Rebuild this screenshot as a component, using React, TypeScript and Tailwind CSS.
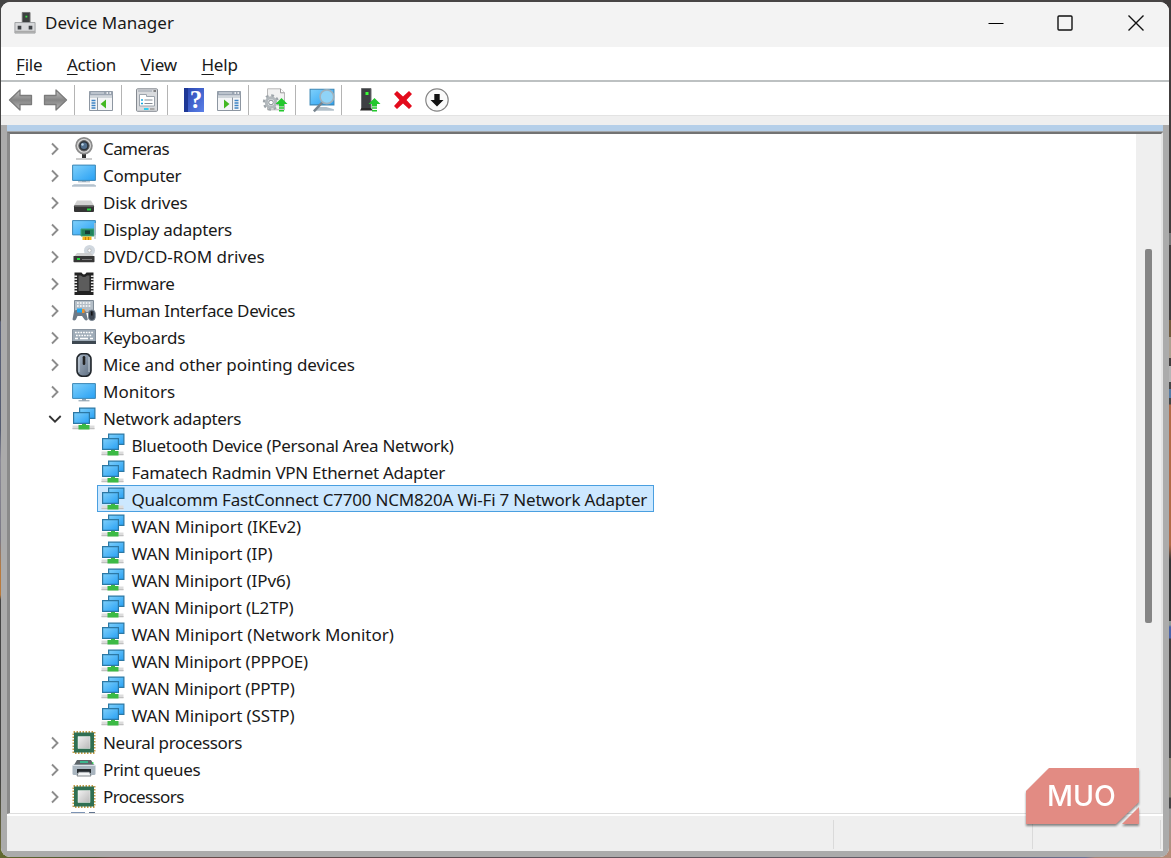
import type { ReactNode } from "react";

type IconProps = { className?: string };

const Gradients = () => (
  <svg className="absolute h-0 w-0" aria-hidden="true">
    <defs>
      <linearGradient id="screen" x1="0" y1="0" x2="1" y2="1">
        <stop offset="0" stopColor="#7fd0fb" />
        <stop offset="1" stopColor="#27a0f4" />
      </linearGradient>
      <linearGradient id="arrow" x1="0" y1="0" x2="0" y2="1">
        <stop offset="0" stopColor="#c4c4c4" />
        <stop offset="0.5" stopColor="#858585" />
        <stop offset="1" stopColor="#b8b8b8" />
      </linearGradient>
      <linearGradient id="metal" x1="0" y1="0" x2="1" y2="1">
        <stop offset="0" stopColor="#f1f1f1" />
        <stop offset="1" stopColor="#b9b9b9" />
      </linearGradient>
      <linearGradient id="mouse" x1="0" y1="0" x2="1" y2="1">
        <stop offset="0" stopColor="#a9b7c7" />
        <stop offset="1" stopColor="#5d6d80" />
      </linearGradient>
    </defs>
  </svg>
);

const Icon = ({ children, className = "h-6 w-6" }: IconProps & { children: ReactNode }) => (
  <svg viewBox="0 0 24 24" className={`${className} shrink-0`}>
    {children}
  </svg>
);

const CameraIcon = () => (
  <Icon>
    <path d="M10 17h4v4h-4z" fill="#333" />
    <path d="M4 22h16" stroke="#999" />
    <circle cx="12" cy="8.8" r="7.9" fill="#d8d8d8" stroke="#8c8c8c" strokeWidth="1.8" />
    <circle cx="12" cy="8.8" r="5.2" fill="#2c333b" stroke="#666" />
    <circle cx="12" cy="8.8" r="3.2" fill="#52708f" />
    <circle cx="10.5" cy="7.5" r="1.2" fill="#bdd5e8" />
  </Icon>
);

const ComputerIcon = () => (
  <Icon>
    <path d="M.6 1.1h22.8v15.3H.6z" fill="url(#screen)" stroke="#3c87b5" />
    <path d="M10 17h4v1h-4z" fill="#8ba1b3" />
    <path d="M6 17.800h12" stroke="#9fb0be" />
    <path d="M2 20h20l2 1.800H0z" fill="#c5d0da" />
    <path d="M0 22h24" stroke="#94a8b9" />
  </Icon>
);

const DiskIcon = () => (
  <Icon>
    <path d="M5 9.500h14l3 5H2z" fill="#d2d2d2" />
    <rect x="2" y="14.300" width="20" height="6.700" rx="1" fill="#343434" />
    <path d="M2.500 15h19" stroke="#888" />
    <path d="M15 17.500h4v2h-4z" fill="#22d13b" />
  </Icon>
);

const DisplayIcon = () => (
  <Icon>
    <path d="M.6 2.600h22.800v14.300H.6z" fill="url(#screen)" stroke="#3c87b5" />
    <path d="M9 11h13v7H9z" fill="#23825b" stroke="#3ba577" />
    <path d="M13 12.500h5v3.500h-5z" fill="#173c34" />
    <path d="M10.500 18.500h9V22h-9z" fill="#f5b51b" />
    <path d="M13.500 19v3m3-3v3" stroke="#c87d0a" />
    <path d="M23 5v16" stroke="#bcc4c8" strokeWidth="1.500" />
  </Icon>
);

const DvdIcon = () => (
  <Icon>
    <circle cx="17.500" cy="5.500" r="5.500" fill="#d1d8df" />
    <circle cx="17.500" cy="5.500" r="1.700" fill="#fff" stroke="#aaa" strokeWidth=".7" />
    <path d="M5 8h14l3 3.500H2z" fill="#cacaca" opacity=".9" />
    <rect x="1.500" y="11" width="21" height="6.200" rx=".6" fill="#373737" />
    <path d="M5 13h3v2H5z" fill="#27d740" />
    <path d="M10 14.500h10" stroke="#777" />
  </Icon>
);

const FirmwareIcon = () => (
  <Icon>
    <path d="M2.500.5h7q2.500 4 5 0h7v22.500h-19z" fill="#222" />
    <path d="M6.500 3.500h2.500q3 3 6 0h2.500V19h-11z" fill="#5c5c5c" />
    <path d="M3.600 3.500v17M20.400 3.500v17" stroke="#e9e9e9" strokeWidth="3" strokeDasharray="1.500 1.500" />
  </Icon>
);

const HidIcon = () => (
  <Icon>
    <path d="M2.500 1.500h19v12h-19z" fill="#b4bec7" stroke="#7f8b96" />
    <path d="M5 4h14M5 7h14" stroke="#fff" strokeWidth="1.500" strokeDasharray="1.700 1.200" />
    <path d="M.5 20.500l1.500-8q.5-2 3-1.500h6q2.500 0 3 2l1.800 7.500q-1.500 2-3.300 0L10 17H5.500L4 20.500q-2 2-3.500 0z" fill="#6d7a87" />
    <path d="M5 9.500h5v4H5z" fill="#20a7f2" />
    <path d="M10 10h2.500v4H10z" fill="#f0932c" />
    <rect x="16.500" y="11" width="6.700" height="10.500" rx="3.200" fill="#3e4854" stroke="#7c8894" />
    <path d="M19.800 12.500v4" stroke="#111" strokeWidth="1.500" />
  </Icon>
);

const KeyboardIcon = () => (
  <Icon>
    <path d="M.5 3.500h23v12H.5z" fill="#9eabb7" stroke="#8994a0" />
    <path d="M3 6.500h18M4 9.500h16" stroke="#fff" strokeWidth="1.600" strokeDasharray="1.700 1" />
    <path d="M3 12.500h3m2 0h8m2 0h3" stroke="#fff" strokeWidth="1.300" />
    <path d="M0 15h24v3H0z" fill="#3e4851" />
  </Icon>
);

const MouseIcon = () => (
  <Icon>
    <rect x="5" y=".7" width="14" height="22.600" rx="5.500" fill="url(#mouse)" stroke="#22272c" strokeWidth="1.600" />
    <path d="M7 4v15M17 4v15" stroke="#d1dae2" strokeWidth=".9" />
    <rect x="10.700" y="3" width="2.600" height="9" rx="1.300" fill="#222" />
  </Icon>
);

const MonitorIcon = () => (
  <Icon>
    <path d="M.6 3.600h22.800v14.800H.6z" fill="url(#screen)" stroke="#3c87b5" />
    <path d="M10 19h4v1.500h-4z" fill="#8ba1b3" />
    <path d="M6.500 20.800h11" stroke="#8497a6" />
  </Icon>
);

const NetworkIcon = () => (
  <Icon>
    <path d="M.5 18.500h22v4H.5z" fill="#dcdcdc" />
    <path d="M.5 21.500h22" stroke="#c0c0c0" />
    <path d="M10 15h4v3h3.500v4.500h-11V18H10z" fill="#3cba45" />
    <path d="M7.600 1.100h15.300v10.300H7.600z" fill="url(#screen)" stroke="#2c78a4" strokeWidth="1.200" />
    <path d="M1.600 5.600h15.800v10.800H1.600z" fill="url(#screen)" stroke="#2c78a4" strokeWidth="1.200" />
  </Icon>
);

const ChipIcon = () => (
  <Icon>
    <rect x="1.500" y="1" width="21" height="21" fill="none" stroke="#c49a45" strokeWidth="2" strokeDasharray="1.500 1.500" />
    <path d="M2 1.500h20v20H2z" fill="#2f6f52" />
    <path d="M6 5.500h12v12H6z" fill="url(#metal)" stroke="#eaf1ed" strokeWidth=".5" />
  </Icon>
);

const PrinterIcon = () => (
  <Icon>
    <path d="M5 2h14l3 5H2z" fill="#5d6468" />
    <path d="M8 4h8" stroke="#31d19a" strokeWidth="1.500" />
    <rect x=".5" y="6.500" width="23" height="10.500" rx="1.500" fill="#a9b5bf" />
    <path d="M1 7.500h22" stroke="#dce3e9" />
    <path d="M5 11h14v4H5z" fill="#24292d" />
    <path d="M6.500 14h11l1.500 4H5z" fill="#f3f5f6" stroke="#636b71" strokeWidth=".8" />
    <path d="M20 5h1.500" stroke="#23d64a" strokeWidth="1.500" />
  </Icon>
);

const UpArrow = () => (
  <>
    <path d="M18.500 10l6 6h-3.500v2.500h-5V16h-3.500z" fill="#23c72d" />
    <path d="M16 20h5M16 22.800h5" stroke="#23c72d" strokeWidth="1.500" />
  </>
);

const ConsoleIcon = ({ flip = false }: { flip?: boolean }) => (
  <Icon>
    <path d="M.5 3.500h23v19H.5z" fill="#f4f5f7" stroke="#8d96a1" />
    <path d="M.5 3.500h23v4H.5z" fill="#9aa4b1" />
    <path d="M2 5h13" stroke="#dce1e7" />
    <path d="M17.500 5h1.500m1.500 0H22" stroke="#fff" strokeWidth="1.300" />
    <path d="M1 9h22" stroke="#c5cbd2" strokeWidth="1.500" />
    <g transform={flip ? "matrix(-1 0 0 1 24 0)" : undefined}>
      <path d="M8.500 9.500V22" stroke="#8d96a1" />
      <path d="M2.500 12.500h4M2.500 15h4M2.500 17.500h4M2.500 20h4" stroke="#3d83c4" strokeWidth="1.300" />
      <path d="M17 11.500v9L11.500 16z" fill="#43b822" />
    </g>
  </Icon>
);

const PropertiesIcon = () => (
  <Icon>
    <rect x="1.500" y=".8" width="21" height="22.500" rx="1" fill="#d9dbde" stroke="#858a91" />
    <path d="M3 3h14" stroke="#aeb4bc" strokeWidth="1.500" />
    <path d="M18.500 3H21" stroke="#666" strokeWidth="1.500" />
    <path d="M4.500 6.500h7v2h8v9.500h-15z" fill="#fff" stroke="#9da4ac" />
    <path d="M6 12h2M6 15.500h2" stroke="#18a8de" strokeWidth="1.500" />
    <path d="M9.500 12h8M9.500 15.500h8" stroke="#858c95" />
    <path d="M9 21h4.500" stroke="#32cdee" strokeWidth="2" />
    <path d="M15 21h4.500" stroke="#aaa" strokeWidth="2" />
  </Icon>
);

const HelpIcon = () => (
  <div className="flex h-6 w-5 items-center justify-center border-l-4 border-[#1d3796] bg-linear-to-br from-[#2d49b4] to-[#5b80e8] font-[Liberation_Serif,serif] text-[25px] leading-6 font-bold text-white">
    ?
  </div>
);

const GearPageIcon = () => (
  <Icon className="h-6 w-6 overflow-visible">
    <path d="M4.500.8h13l4 4v17h-17z" fill="#f1f1f1" stroke="#b8b8b8" />
    <path d="M17.500.8v4h4" fill="#fff" stroke="#999" />
    <circle cx="8" cy="14.500" r="7" fill="none" stroke="#9ea5aa" strokeWidth="2.400" strokeDasharray="2.750 2.750" />
    <circle cx="8" cy="14.500" r="4.700" fill="#e9ecee" stroke="#b2b8bc" strokeWidth="3" />
    <circle cx="8" cy="14.500" r="2.300" fill="#fff" stroke="#858d92" />
    <UpArrow />
  </Icon>
);

const ScanIcon = () => (
  <Icon className="h-[26px] w-[26px]">
    <path d="M1 2h22v14.500H1z" fill="url(#screen)" stroke="#3c87b5" />
    <path d="M8 18.500h8l7 2v1.500H5z" fill="#b3c0ca" />
    <path d="M12.500 14L4.500 22.500" stroke="#78858f" strokeWidth="2.300" />
    <circle cx="16.500" cy="9" r="6.300" fill="#8fd3f7" stroke="#9eb1bd" strokeWidth="1.500" />
  </Icon>
);

const UpdateDriverIcon = () => (
  <Icon className="h-6 w-6 overflow-visible">
    <path d="M5.500.5h9.500v20H5.500z" fill="#3d4043" stroke="#6c6f71" />
    <path d="M5.500 20h9.500l2 2.500H4z" fill="#292929" />
    <path d="M9.500 4h3v3h-3z" fill="#3aff37" />
    <UpArrow />
  </Icon>
);

const BackIcon = ({ flip = false }: { flip?: boolean }) => (
  <svg viewBox="0 0 25 24" className={`h-6 w-[25px] ${flip ? "-scale-x-100" : ""}`}>
    <path d="M1.500 12L12 2v5.500h11.500v9H12V22z" fill="url(#arrow)" stroke="#7b7b7b" strokeWidth="1.300" strokeLinejoin="round" />
  </svg>
);

const Chevron = ({ open = false }: { open?: boolean }) => (
  <svg viewBox="0 0 14 14" className="mt-0.5 h-3.5 w-3.5">
    {open ? (
      <path d="M1.300 4l5.700 5.700L12.700 4" fill="none" stroke="#333" strokeWidth="1.800" />
    ) : (
      <path d="M4 1.500L9.500 7 4 12.500" fill="none" stroke="#8c8c8c" strokeWidth="1.900" />
    )}
  </svg>
);

type TreeNode = { label: string; tracking: string; icon: () => ReactNode; open?: boolean };

const before: TreeNode[] = [
  { label: "Cameras", tracking: "tracking-[-0.6px]", icon: CameraIcon },
  { label: "Computer", tracking: "tracking-[-0.3px]", icon: ComputerIcon },
  { label: "Disk drives", tracking: "tracking-[-0.2px]", icon: DiskIcon },
  { label: "Display adapters", tracking: "tracking-[-0.27px]", icon: DisplayIcon },
  { label: "DVD/CD-ROM drives", tracking: "tracking-normal", icon: DvdIcon },
  { label: "Firmware", tracking: "tracking-[-0.5px]", icon: FirmwareIcon },
  { label: "Human Interface Devices", tracking: "tracking-[-0.37px]", icon: HidIcon },
  { label: "Keyboards", tracking: "tracking-[-0.2px]", icon: KeyboardIcon },
  { label: "Mice and other pointing devices", tracking: "tracking-[-0.1px]", icon: MouseIcon },
  { label: "Monitors", tracking: "tracking-normal", icon: MonitorIcon },
  { label: "Network adapters", tracking: "tracking-[-0.36px]", icon: NetworkIcon, open: true },
];

const adapters = [
  { label: "Bluetooth Device (Personal Area Network)", tracking: "tracking-[-0.3px]" },
  { label: "Famatech Radmin VPN Ethernet Adapter", tracking: "tracking-[-0.28px]" },
  {
    label: "Qualcomm FastConnect C7700 NCM820A Wi-Fi 7 Network Adapter",
    tracking: "tracking-[-0.2px]",
    selected: true,
  },
  { label: "WAN Miniport (IKEv2)", tracking: "tracking-[-0.05px]" },
  { label: "WAN Miniport (IP)", tracking: "tracking-[-0.1px]" },
  { label: "WAN Miniport (IPv6)", tracking: "tracking-[-0.1px]" },
  { label: "WAN Miniport (L2TP)", tracking: "tracking-[-0.15px]" },
  { label: "WAN Miniport (Network Monitor)", tracking: "tracking-[-0.04px]" },
  { label: "WAN Miniport (PPPOE)", tracking: "tracking-[-0.18px]" },
  { label: "WAN Miniport (PPTP)", tracking: "tracking-[-0.2px]" },
  { label: "WAN Miniport (SSTP)", tracking: "tracking-[-0.1px]" },
];

const after: TreeNode[] = [
  { label: "Neural processors", tracking: "tracking-[-0.35px]", icon: ChipIcon },
  { label: "Print queues", tracking: "tracking-[-0.36px]", icon: PrinterIcon },
  { label: "Processors", tracking: "tracking-[-0.6px]", icon: ChipIcon },
];

const Category = ({ label, tracking, icon: NodeIcon, open }: TreeNode) => (
  <div className="flex h-[27px] items-center pl-[38px]">
    <Chevron open={open} />
    <div className="ml-[9.5px] flex h-[27px] items-start pt-[2.5px]">
      <NodeIcon />
    </div>
    <span className={`ml-[7.5px] pt-0.5 whitespace-nowrap ${tracking}`}>{label}</span>
  </div>
);

const Adapter = ({ label, tracking, selected }: { label: string; tracking: string; selected?: boolean }) => (
  <div className="flex h-[27px] pl-[87px]">
    <div
      className={`flex items-center border pl-[2.5px] ${
        selected ? "w-[557px] border-[#4a9fe0] bg-[#cce8ff]" : "border-transparent"
      }`}
    >
      <div className="pt-[1.5px]">
        <NetworkIcon />
      </div>
      <span className={`ml-[7px] pt-0.5 whitespace-nowrap ${tracking}`}>{label}</span>
    </div>
  </div>
);

const Divider = ({ className = "" }: IconProps) => <div className={`h-[30px] w-px bg-[#b4b4b4] ${className}`} />;

const TitleBar = () => (
  <header className="flex h-[45px] shrink-0 items-center bg-[#f3f3f3] pb-[3px] pl-[13px]">
    <Icon className="h-6 w-[22px]">
      <path d="M9 .5h8.500V13H9z" fill="#3d4040" stroke="#707070" />
      <path d="M12.500 4h2v2h-2z" fill="#3ae545" />
      <path d="M1 11.500h22V23H1z" fill="#d7d8da" stroke="#9a9c9f" />
      <path d="M1 21.500h22" stroke="#aaa" strokeWidth="2" />
      <path d="M4 15h4v4H4zm12 0h4v4h-4z" fill="#3f4246" />
    </Icon>
    <h1 className="ml-[9px] text-[17px]">Device Manager</h1>
    <div className="ml-auto flex items-center pr-[25px]">
      <svg viewBox="0 0 16 16" className="h-4 w-4">
        <path d="M.5 8.500h15" stroke="#000" />
      </svg>
      <svg viewBox="0 0 16 16" className="ml-[53px] h-4 w-4">
        <rect x="1" y="1" width="14" height="14" rx="1" fill="none" stroke="#111" strokeWidth="1.400" />
      </svg>
      <svg viewBox="0 0 16 16" className="ml-[55px] h-4 w-4">
        <path d="M.5.5l15 15m0-15l-15 15" stroke="#111" strokeWidth="1.400" />
      </svg>
    </div>
  </header>
);

const MenuBar = () => (
  <nav className="flex h-[33px] shrink-0 items-center gap-[24.5px] pt-0.5 pl-[15px] text-[17px] tracking-[-0.2px]">
    {["File", "Action", "View", "Help"].map((item) => (
      <span key={item}>
        <u className="underline decoration-1 underline-offset-[3px]">{item[0]}</u>
        {item.slice(1)}
      </span>
    ))}
  </nav>
);

const Toolbar = () => (
  <div className="flex h-[36px] shrink-0 items-center border-t-2 border-b border-t-[#bdc1c2] border-b-[#e3e3e3] pt-0.5 pl-[7px]">
    <BackIcon />
    <div className="ml-[10px]">
      <BackIcon flip />
    </div>
    <Divider className="ml-[6px]" />
    <div className="ml-[14px]"><ConsoleIcon /></div>
    <Divider className="ml-[8px]" />
    <div className="ml-[13px]"><PropertiesIcon /></div>
    <Divider className="ml-[8px]" />
    <div className="ml-[16px]"><HelpIcon /></div>
    <div className="ml-[13px]"><ConsoleIcon flip /></div>
    <Divider className="ml-[7px]" />
    <div className="ml-[14px]"><GearPageIcon /></div>
    <Divider className="ml-[8px]" />
    <div className="ml-[13px]"><ScanIcon /></div>
    <Divider className="ml-[6px]" />
    <div className="ml-[14px]"><UpdateDriverIcon /></div>
    <svg viewBox="0 0 20 20" className="ml-[13px] h-5 w-5">
      <path d="M1 4l3-3 6 5.500L16 1l3 3-5.500 6 5.500 6-3 3-6-5.500L4 19l-3-3 5.500-6z" fill="#e30b1c" />
    </svg>
    <svg viewBox="0 0 24 24" className="ml-3 h-6 w-6">
      <circle cx="12" cy="12" r="11.200" fill="#fafafa" stroke="#858585" strokeWidth="1.200" />
      <path d="M9.300 6h5.400v6h3.800L12 18.500 5.500 12h3.800z" fill="#111" />
    </svg>
  </div>
);

const Watermark = () => (
  <div className="absolute top-[767px] left-[1025px] h-[60px] w-[116px] drop-shadow-[0_2px_1px_rgba(0,0,0,0.45)]">
    <svg viewBox="0 0 116 60" className="absolute inset-0">
      <path d="M24 1h90v34L91 57H1V24z" fill="#e28b83" />
      <path d="M114 40v17H97z" fill="#e28b83" />
    </svg>
    <span className="absolute top-[14px] left-[22px] origin-left scale-x-[0.98] font-[Inter,sans-serif] text-[29px] leading-[30px] font-medium text-white">
      MUO
    </span>
  </div>
);

export default function App() {
  return (
    <div className="relative h-[858px] w-[1171px] overflow-hidden bg-[#484545] font-[Noto_Sans,sans-serif] text-[17px] text-[#191919]">
      <Gradients />
      {/* desktop showing around the window edges */}
      <div className="absolute top-0 right-0 h-full w-2 bg-[linear-gradient(to_bottom,#403c3c_233px,#777_233px,#777_245px,#403c3c_245px,#403c3c_320px,#715a3c_320px,#715a3c_337px,#aca090_337px,#aca090_358px,#403c3c_358px,#403c3c_366px,#b5b5b5_366px,#b5b5b5_382px,#444_382px,#444_389px,#537ba6_389px,#537ba6_398px,#444_398px,#444_404px,#b06a45_405px,#b06a45_545px,#333_560px,#333_621px,#8f9a97_621px,#8f9a97_625px,#4862a8_627px,#4862a8_638px,#403c3c_639px,#444_758px,#888578_758px,#888578_797px,#444_798px,#444_808px,#9a9a9a_809px,#b58c78_858px)]" />
      <div className="absolute top-0 left-0 h-full w-2 bg-[linear-gradient(to_bottom,#444_320px,#596078_322px,#555c70_430px,#8b8a96_460px,#7b7985_540px,#b97a3c_570px,#b97a3c_595px,#444_600px,#444_780px,#74723a_858px)]" />
      <div className="absolute bottom-0 left-0 h-2 w-full bg-[linear-gradient(to_right,#62682f,#4c5230_95px,#6b4b47_110px,#5c4c50_400px,#65606c_1000px,#6d7295_1085px,#a58276_1095px,#b58c78)]" />
      <div className="relative flex h-[858px] pt-0.5 pr-0.5 pl-px">
        <main className="flex h-[855px] w-full flex-col overflow-hidden rounded-[9px] bg-white">
          <TitleBar />
          <MenuBar />
          <Toolbar />
          <div className="h-[9px] shrink-0 bg-[#efefef]" />
          <div className="flex min-h-0 flex-1 flex-col border-r-[6px] border-b-[6px] border-l-[6px] border-[#ababab]">
            <div className="h-[6px] shrink-0 bg-[#b5cfe9]" />
            <div className="h-px shrink-0 bg-[#a3a6a9]" />
            <section className="flex h-[682px] shrink-0 overflow-hidden border-t-2 border-r-2 border-b border-l-[3px] border-t-[#737373] border-r-[#e4e4e4] border-b-[#dedede] border-l-[#8a8a8a] bg-white">
              <div className="flex-1">
                {before.map((node) => (
                  <Category key={node.label} {...node} />
                ))}
                {adapters.map((node) => (
                  <Adapter key={node.label} {...node} />
                ))}
                {after.map((node) => (
                  <Category key={node.label} {...node} />
                ))}
                <div className="ml-[61px] flex gap-1 pt-[3px]">
                  <div className="h-1 w-[14px] bg-[#7d94b4]" />
                  <div className="h-1 w-1.5 bg-[#62758f]" />
                </div>
              </div>
              <div className="flex w-[25px] justify-center bg-[#efefef] pt-[115px]">
                <div className="h-[374px] w-[7px] rounded-[2px] bg-[#858585]" />
              </div>
            </section>
            <div className="h-0.5 shrink-0 bg-white" />
            <footer className="flex flex-1 bg-[#efefef] pt-1 pb-0.5">
              <div className="w-[827px] border-r border-[#dadada]" />
              <div className="w-[199px] border-r border-[#dadada]" />
              <div className="w-[128px] border-r border-[#dadada]" />
            </footer>
          </div>
        </main>
      </div>
      <Watermark />
    </div>
  );
}
